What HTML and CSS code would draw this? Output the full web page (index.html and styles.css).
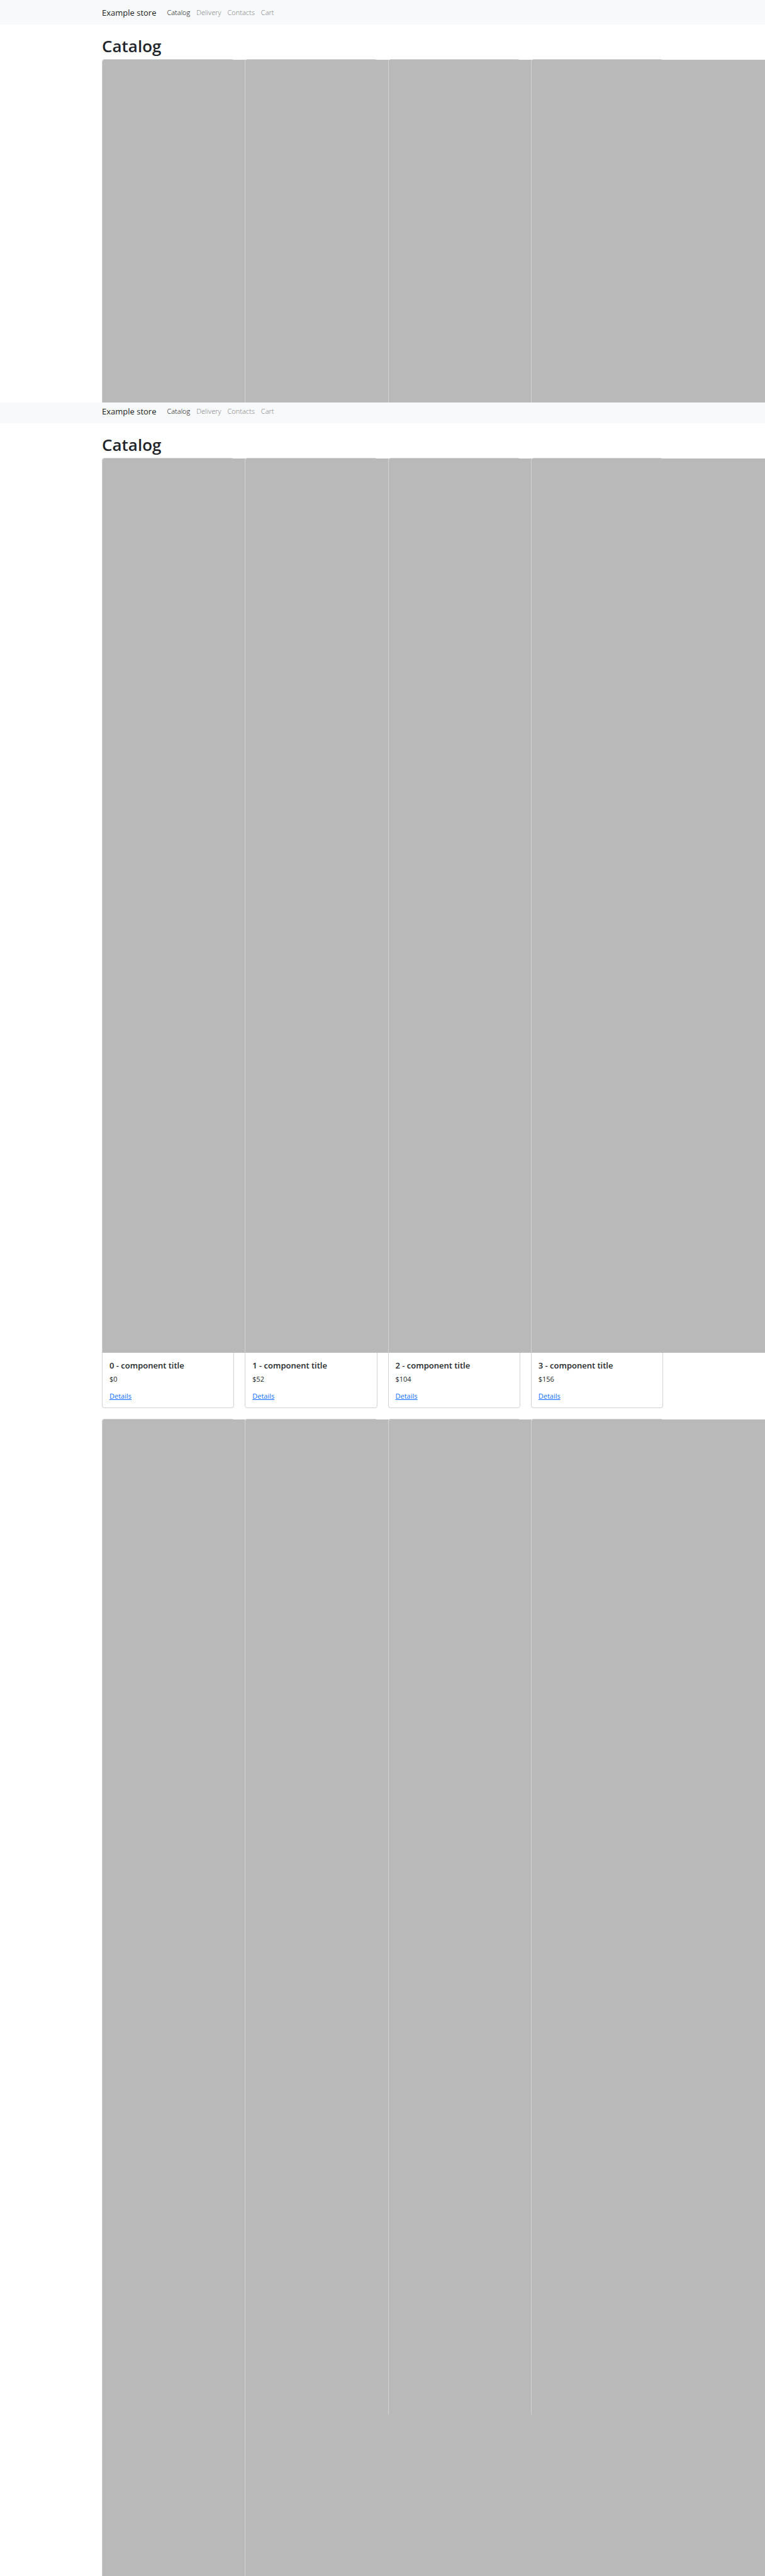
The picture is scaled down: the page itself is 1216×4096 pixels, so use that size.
FILE: index.html
```html
<!DOCTYPE html>
<html lang="en">
<head>
<meta charset="utf-8">
<meta name="viewport" content="width=device-width, initial-scale=1">
<title>Catalog</title>
<link rel="stylesheet" href="styles.css">
</head>
<body>
<section class="screen screen-preview">
  <nav class="navbar">
    <div class="container navbar-inner">
      <a class="brand" href="#">Example store</a>
      <a class="nav-link active" href="#">Catalog</a>
      <a class="nav-link" href="#">Delivery</a>
      <a class="nav-link" href="#">Contacts</a>
      <a class="nav-link" href="#">Cart</a>
    </div>
  </nav>
  <div class="container">
    <h1 class="title">Catalog</h1>
    <div class="grid">
      <article class="card"><div class="photo"></div></article>
      <article class="card"><div class="photo"></div></article>
      <article class="card"><div class="photo"></div></article>
      <article class="card"><div class="photo"></div></article>
    </div>
  </div>
</section>
<section class="screen">
  <nav class="navbar navbar-tight">
    <div class="container navbar-inner">
      <a class="brand" href="#">Example store</a>
      <a class="nav-link active" href="#">Catalog</a>
      <a class="nav-link" href="#">Delivery</a>
      <a class="nav-link" href="#">Contacts</a>
      <a class="nav-link" href="#">Cart</a>
    </div>
  </nav>
  <main class="container">
    <h1 class="title">Catalog</h1>
    <div class="grid">
      <article class="card">
        <div class="photo"></div>
        <div class="card-body">
          <h2 class="card-title">0 - component title</h2>
          <p class="price">$0</p>
          <a class="details" href="#">Details</a>
        </div>
      </article>
      <article class="card">
        <div class="photo"></div>
        <div class="card-body">
          <h2 class="card-title">1 - component title</h2>
          <p class="price">$52</p>
          <a class="details" href="#">Details</a>
        </div>
      </article>
      <article class="card">
        <div class="photo"></div>
        <div class="card-body">
          <h2 class="card-title">2 - component title</h2>
          <p class="price">$104</p>
          <a class="details" href="#">Details</a>
        </div>
      </article>
      <article class="card">
        <div class="photo"></div>
        <div class="card-body">
          <h2 class="card-title">3 - component title</h2>
          <p class="price">$156</p>
          <a class="details" href="#">Details</a>
        </div>
      </article>
      <article class="card card-open"><div class="photo photo-tall"></div></article>
      <article class="card card-open"><div class="photo photo-tall"></div></article>
      <article class="card card-open"><div class="photo photo-medium"></div></article>
      <article class="card card-open"><div class="photo photo-medium"></div></article>
    </div>
  </main>
</section>
</body>
</html>
```
FILE: styles.css
```css
* {
  box-sizing: border-box;
}

body {
  margin: 0;
  overflow-x: hidden;
  background: #fff;
  color: #212529;
  font-family: "Open Sans", "Noto Sans", sans-serif;
  font-size: 11px;
  line-height: 16px;
}

.screen {
  overflow: hidden;
}

.screen-preview {
  max-height: 640px;
}

.container {
  width: 100%;
  max-width: 892px;
  margin: 0 auto;
}

.navbar {
  padding: 6px 0;
  background: #f8f9fb;
}

.navbar-tight {
  padding-top: 0;
}

.navbar-inner {
  display: flex;
  align-items: center;
  height: 27px;
}

.brand {
  margin-right: 12px;
  color: #1a1d20;
  font-size: 13px;
  line-height: 20px;
  text-decoration: none;
}

.nav-link {
  padding: 0 5px;
  color: #77787a;
  font-weight: 300;
  text-decoration: none;
}

.nav-link.active {
  color: #000;
}

.title {
  margin: 18px 0 4px;
  font-size: 26px;
  font-weight: 600;
  line-height: 33px;
}

.grid {
  display: grid;
  grid-template-columns: repeat(4, minmax(0, 1fr));
  gap: 17px;
  align-items: start;
}

.card {
  border: 1px solid #d2d2d2;
  border-radius: 4px;
  background: #fff;
}

.card-open {
  border-bottom: 0;
  border-radius: 4px 4px 0 0;
}

.photo {
  width: 1422px;
  height: 1422px;
  border-radius: 3px 0 0 0;
  background: #b9b9b9;
}

.photo-medium {
  height: 1582px;
}

.photo-tall {
  height: 1839px;
}

.card-body {
  padding: 12px 11px 10px;
}

.card-title {
  margin: 0 0 5px;
  font-size: 13px;
  font-weight: 600;
  line-height: 17px;
}

.price {
  margin: 0 0 11px;
}

.details {
  display: inline-block;
  color: #0d6efd;
}
```
